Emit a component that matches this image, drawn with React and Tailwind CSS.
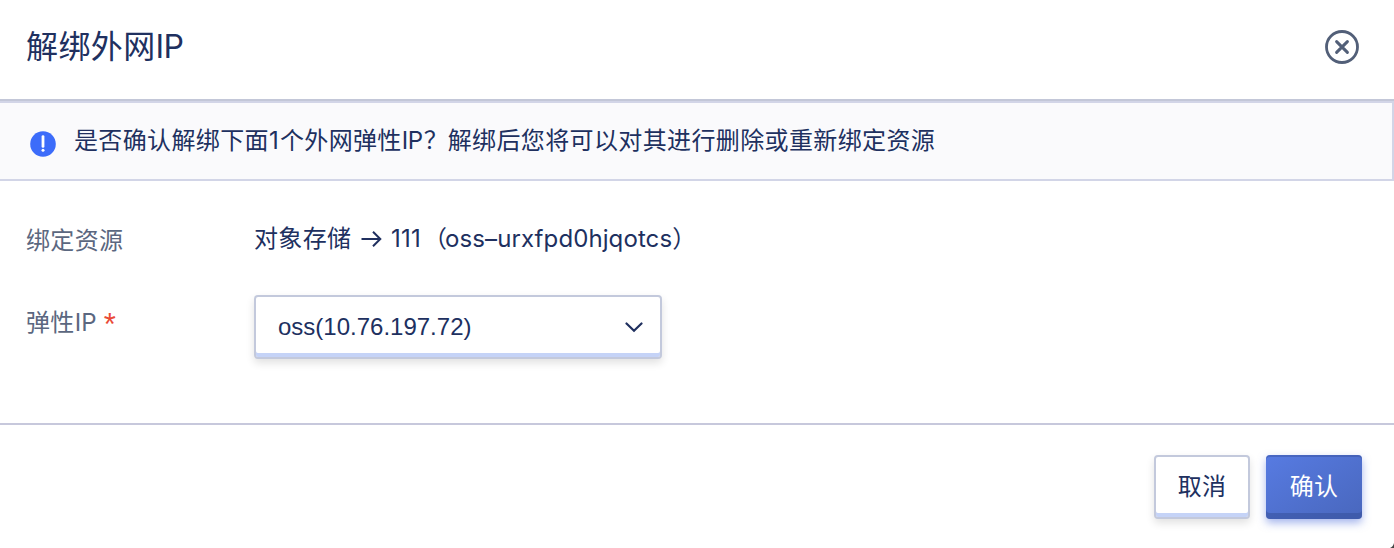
import React from 'react';

function CloseIcon() {
  return (
    <svg width="34" height="34" viewBox="0 0 34 34" fill="none" stroke="#525f78">
      <circle cx="17" cy="17" r="15.5" strokeWidth="2.8" />
      <path d="M11.6 11.6 22.4 22.4M22.4 11.6 11.6 22.4" strokeWidth="3" strokeLinecap="round" />
    </svg>
  );
}

function InfoIcon() {
  return (
    <svg width="26" height="26" viewBox="0 0 26 26">
      <circle cx="13" cy="13" r="12.8" fill="#3c6cfa" />
      <path d="M13 5.6v9.8" stroke="#fff" strokeWidth="2.8" strokeLinecap="round" />
      <circle cx="13" cy="19.2" r="1.5" fill="#fff" />
    </svg>
  );
}

function Row({ label, className, children }) {
  return (
    <div className={'flex items-start pl-[26px] ' + className}>
      <div className="w-[228px] shrink-0 text-[#5b6780]">{label}</div>
      {children}
    </div>
  );
}

export default function App() {
  return (
    <div className="relative flex h-[548px] w-[1394px] flex-col overflow-hidden bg-white font-['Inter','Noto_Sans_CJK_SC',sans-serif] text-[24px] leading-[36px] text-[#20305f] whitespace-nowrap">
      <header className="flex h-[101px] shrink-0 items-start justify-between border-b-2 border-[#c3c7d8] pr-[35px] pl-[26px]">
        <h1 className="pt-[23px] text-[32px] leading-[48px] font-normal">
          <span className="tracking-[0.4px]">解绑外网</span>
          <span className="tracking-[-0.6px]">IP</span>
        </h1>
        <button aria-label="关闭" className="mt-[30px]"><CloseIcon /></button>
      </header>

      <section className="flex h-[80px] shrink-0 items-start border-y-2 border-r-2 border-[#d2d5e7] bg-[#fafafc] pl-[30px]">
        <span className="mt-[28px] mr-[18px]"><InfoIcon /></span>
        <p className="mt-[20px] flex">
          <span className="tracking-[0.37px]">是否确认解绑下面</span>
          <span className="w-[11px]">1</span>
          <span className="tracking-[0.35px]">个外网弹性</span>
          <span className="w-[22px] tracking-[-0.3px]">IP</span>
          <span className="w-[24px]">？</span>
          <span className="tracking-[0.37px]">解绑后您将可以对其进行删除或重新绑定资源</span>
        </p>
      </section>

      <main className="h-[242px] shrink-0">
        <Row className="mt-[40px]" label={<span className="relative top-[2px] tracking-[0.35px]">绑定资源</span>}>
          <div className="flex">
            <span className="w-[105px] tracking-[0.35px]">对象存储</span>
            <svg className="mt-[7px] w-[32px]" width="32" height="22" viewBox="0 0 32 22" fill="none" stroke="#20305f" strokeWidth="2">
              <path d="M2.5 11H21.5M14 3.8 21.3 11 14 18.2" />
            </svg>
            <span className="w-[32px] tracking-[0.3px]">111</span>
            <span className="w-[22px]">（</span>
            <span className="tracking-[0.1px]">oss–urxfpd0hjqotcs</span>
            <span>）</span>
          </div>
        </Row>
        <Row
          className="mt-[38px]"
          label={
            <div className="flex pt-[10px]">
              <span className="tracking-[0.35px]">弹性</span>
              <span className="w-[29px]">IP</span>
              <span className="pt-[2px] font-['Liberation_Sans',sans-serif] text-[31px] text-[#ea4a36]">*</span>
            </div>
          }
        >
          <button className="flex h-[64px] w-[408px] items-center justify-between rounded-[4px] border-2 border-[#c3c9dc] bg-white pr-[17px] pl-[22px] shadow-[inset_0_-4px_0_#c5d3f7,0_4px_8px_rgba(0,0,0,0.12)]">
            <span className="font-['Liberation_Sans',sans-serif]">oss(10.76.197.72)</span>
            <svg width="18" height="12" viewBox="0 0 18 12" fill="none" stroke="#20305f" strokeWidth="2.2" strokeLinecap="round">
              <path d="M1.5 2.5 9 9.8l7.5-7.3" />
            </svg>
          </button>
        </Row>
      </main>

      <footer className="flex flex-1 items-start justify-end gap-[16px] border-t-2 border-[#c7c8dc] pt-[30px] pr-[32px]">
        <button className="h-[64px] w-[96px] rounded-[4px] border-2 border-[#c3c9dc] bg-white tracking-[0.35px] shadow-[inset_0_-4px_0_#c5d3f7,0_4px_8px_rgba(0,0,0,0.12)]">取消</button>
        <button className="h-[64px] w-[96px] rounded-[4px] bg-linear-to-br from-[#577be2] to-[#4967bd] tracking-[0.35px] text-white shadow-[inset_0_2px_0_rgba(50,75,150,0.4),inset_0_-6px_0_rgba(55,80,155,0.55),0_4px_8px_rgba(77,110,220,0.5)]">确认</button>
      </footer>
      <svg className="absolute right-0 bottom-0" width="4" height="5" viewBox="0 0 4 5">
        <path d="M4 0v5H0Q3 4 4 0Z" fill="#444" />
      </svg>
    </div>
  );
}
